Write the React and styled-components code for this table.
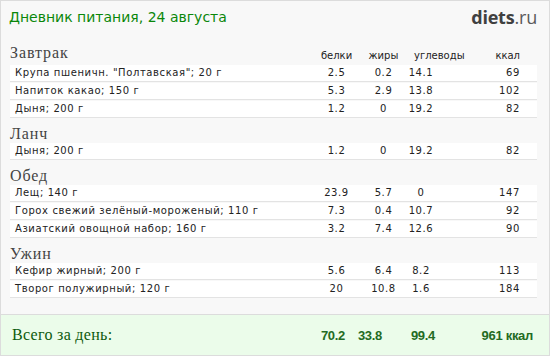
import React from 'react';
import styled, { createGlobalStyle } from 'styled-components';

const Global = createGlobalStyle`
  html, body { margin: 0; padding: 0; background: #fff; }
  body { font-family: "DejaVu Sans", Verdana, sans-serif; }
`;

const Frame = styled.div`
  width: 550px;
  height: 356px;
  box-sizing: border-box;
  border: 1px solid #dcdcdc;
  background: #f8f8f8;
  display: flex;
  flex-direction: column;
  overflow: hidden;
`;

const TopBar = styled.header`
  height: 40px;
  box-sizing: border-box;
  padding: 6px 12px 0 8px;
  display: flex;
  justify-content: space-between;
  align-items: flex-start;
`;

const Title = styled.h1`
  margin: 0;
  font-family: "DejaVu Sans", Verdana, sans-serif;
  font-weight: normal;
  font-size: 14px;
  line-height: 20px;
  color: #0a870a;
`;

const Logo = styled.div`
  font-family: "Open Sans", Inter, sans-serif;
  font-size: 18px;
  line-height: 20px;
  color: #454545;
  letter-spacing: -0.2px;
  b { font-weight: 700; color: #404040; }
  span { font-weight: 400; color: #5a5a5a; }
`;

const Body = styled.main`
  padding: 0 12px 0 9px;
  display: flex;
  flex-direction: column;
`;

const cols = `1fr 49px 45px 30px 84px`;

const Heading = styled.div`
  height: 24px;
  box-sizing: border-box;
  padding: ${(p) => (p.$first ? 3 : 6)}px 17px 0 0;
  display: grid;
  grid-template-columns: ${cols};
  align-items: start;
`;

const HeadingText = styled.h2`
  margin: 0;
  font-family: "Liberation Serif", "Times New Roman", serif;
  font-weight: normal;
  font-size: 16px;
  line-height: 18px;
  letter-spacing: 0.9px;
  color: #444;
`;

const Label = styled.div`
  margin-top: 6px;
  font-size: 10px;
  line-height: 12px;
  color: #222;
  white-space: nowrap;
  display: flex;
  justify-content: ${(p) => p.$justify || 'center'};
  padding-left: ${(p) => p.$indent || 0}px;
`;

const Row = styled.div`
  height: 16px;
  background: #fff;
  border-bottom: 1px solid #e3e3e3;
  margin-bottom: 1px;
  padding: 0 17px 0 5px;
  display: grid;
  grid-template-columns: ${cols};
  align-items: center;
  font-size: 10px;
  line-height: 16px;
  letter-spacing: 0.6px;
  color: #222;
`;

const Name = styled.div`
  white-space: nowrap;
`;

const Num = styled.div`
  display: flex;
  justify-content: ${(p) => (p.$right ? 'flex-end' : 'center')};
  white-space: nowrap;
`;

const TotalBand = styled.footer`
  margin-top: auto;
  height: 41px;
  box-sizing: border-box;
  border-top: 1px solid #dcdcdc;
  background: #ebfcea;
  padding: 0 16px 0 11px;
  display: grid;
  grid-template-columns: 1fr 36px 38px 68px 76px;
  align-items: center;
`;

const TotalLabel = styled.div`
  font-family: "Liberation Serif", "Times New Roman", serif;
  font-size: 16px;
  letter-spacing: 0.3px;
  color: #0d5a0d;
`;

const TotalNum = styled.div`
  display: flex;
  justify-content: ${(p) => (p.$right ? 'flex-end' : 'center')};
  font-family: "Liberation Sans", Arial, sans-serif;
  font-weight: bold;
  font-size: 13px;
  letter-spacing: -0.3px;
  color: #236b23;
  white-space: nowrap;
`;

const meals = [
  {
    name: 'Завтрак',
    items: [
      ['Крупа пшеничн. "Полтавская"; 20 г', '2.5', '0.2', '14.1', '69'],
      ['Напиток какао; 150 г', '5.3', '2.9', '13.8', '102'],
      ['Дыня; 200 г', '1.2', '0', '19.2', '82'],
    ],
  },
  {
    name: 'Ланч',
    items: [['Дыня; 200 г', '1.2', '0', '19.2', '82']],
  },
  {
    name: 'Обед',
    items: [
      ['Лещ; 140 г', '23.9', '5.7', '0', '147'],
      ['Горох свежий зелёный-мороженый; 110 г', '7.3', '0.4', '10.7', '92'],
      ['Азиатский овощной набор; 160 г', '3.2', '7.4', '12.6', '90'],
    ],
  },
  {
    name: 'Ужин',
    items: [
      ['Кефир жирный; 200 г', '5.6', '6.4', '8.2', '113'],
      ['Творог полужирный; 120 г', '20', '10.8', '1.6', '184'],
    ],
  },
];

export default function App() {
  return (
    <>
      <Global />
      <Frame>
        <TopBar>
          <Title>Дневник питания, 24 августа</Title>
          <Logo>
            <b>diets</b>
            <span>.ru</span>
          </Logo>
        </TopBar>
        <Body>
          {meals.map((meal, i) => (
            <section key={meal.name}>
              <Heading $first={i === 0}>
                <HeadingText>{meal.name}</HeadingText>
                {i === 0 && (
                  <>
                    <Label>белки</Label>
                    <Label>жиры</Label>
                    <Label $justify="flex-start" $indent={8}>углеводы</Label>
                    <Label $justify="flex-end">ккал</Label>
                  </>
                )}
              </Heading>
              {meal.items.map((it, j) => (
                <Row key={j}>
                  <Name>{it[0]}</Name>
                  <Num>{it[1]}</Num>
                  <Num>{it[2]}</Num>
                  <Num>{it[3]}</Num>
                  <Num $right>{it[4]}</Num>
                </Row>
              ))}
            </section>
          ))}
        </Body>
        <TotalBand>
          <TotalLabel>Всего за день:</TotalLabel>
          <TotalNum>70.2</TotalNum>
          <TotalNum>33.8</TotalNum>
          <TotalNum>99.4</TotalNum>
          <TotalNum $right>961 ккал</TotalNum>
        </TotalBand>
      </Frame>
    </>
  );
}
